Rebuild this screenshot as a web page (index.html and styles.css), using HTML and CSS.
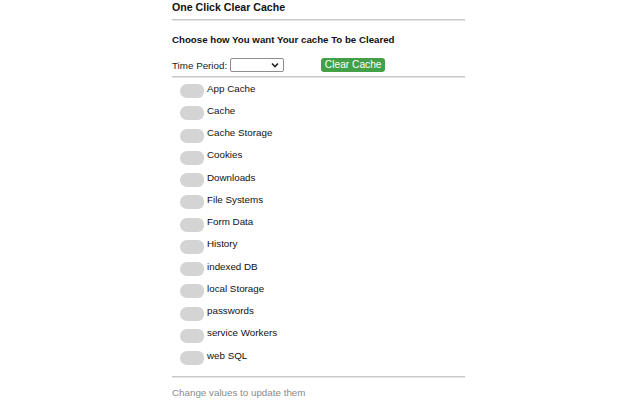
FILE: index.html
```
<!DOCTYPE html>
<html>
<head>
<meta charset="utf-8">
<link rel="stylesheet" href="styles.css">
</head>
<body>
<div class="wrap">
  <div class="title">One Click Clear Cache</div>
  <div class="rule rule-top"></div>
  <div class="heading">Choose how You want Your cache To be Cleared</div>
  <div class="controls">
    <span class="label">Time Period:</span>
    <span class="select-box">
      <select class="select"><option></option></select>
      <svg class="chev" width="8" height="6" viewBox="0 0 8 6"><path d="M1 1.5 L4 4.5 L7 1.5" fill="none" stroke="#222" stroke-width="1.6"/></svg>
    </span>
    <button class="btn">Clear Cache</button>
  </div>
  <div class="rule rule-mid"></div>
  <ul class="list">
    <li class="item"><span class="toggle"></span><span>App Cache</span></li>
    <li class="item"><span class="toggle"></span><span>Cache</span></li>
    <li class="item"><span class="toggle"></span><span>Cache Storage</span></li>
    <li class="item"><span class="toggle"></span><span>Cookies</span></li>
    <li class="item"><span class="toggle"></span><span>Downloads</span></li>
    <li class="item"><span class="toggle"></span><span>File Systems</span></li>
    <li class="item"><span class="toggle"></span><span>Form Data</span></li>
    <li class="item"><span class="toggle"></span><span>History</span></li>
    <li class="item"><span class="toggle"></span><span>indexed DB</span></li>
    <li class="item"><span class="toggle"></span><span>local Storage</span></li>
    <li class="item"><span class="toggle"></span><span>passwords</span></li>
    <li class="item"><span class="toggle"></span><span>service Workers</span></li>
    <li class="item"><span class="toggle"></span><span>web SQL</span></li>
  </ul>
  <div class="rule rule-bottom"></div>
  <div class="footer">Change values to update them</div>
</div>
</body>
</html>
```
FILE: styles.css
```
html, body {
  margin: 0;
  padding: 0;
  background: #fff;
}
body {
  font-family: "Liberation Sans", Arial, sans-serif;
  color: #111;
  font-size: 9.8px;
}
.wrap {
  width: 293px;
  margin: 0 0 0 172px;
  display: flex;
  flex-direction: column;
}
.title {
  font-weight: bold;
  font-size: 10.6px;
  line-height: 14px;
  height: 14px;
  color: #111;
}
.rule {
  height: 1px;
  border-top: 1px solid #c8c8c8;
  background: #e4e4e4;
}
.rule-top { margin-top: 5px; }
.heading {
  font-weight: bold;
  font-size: 9.7px;
  line-height: 14px;
  margin-top: 12px;
}
.controls {
  display: flex;
  align-items: center;
  margin-top: 11px;
  height: 14px;
}
.label {
  font-size: 9.8px;
  color: #222;
}
.select-box {
  position: relative;
  margin-left: 3px;
  width: 54px;
  height: 14px;
  display: inline-block;
}
.select {
  appearance: none;
  -webkit-appearance: none;
  box-sizing: border-box;
  width: 54px;
  height: 14px;
  border: 1px solid #8e8e8e;
  border-radius: 2px;
  background: #fff;
  margin: 0;
  padding: 0;
}
.chev {
  position: absolute;
  right: 5px;
  top: 4px;
}
.btn {
  margin-left: 37px;
  height: 14px;
  width: 64px;
  padding: 0;
  border: none;
  border-radius: 3px;
  background: #43a047;
  color: #fff;
  font-family: "Liberation Sans", Arial, sans-serif;
  font-size: 10.2px;
  line-height: 14px;
}
.rule-mid { margin-top: 4px; }
.list {
  list-style: none;
  margin: -1px 0 0 0;
  padding: 0;
}
.item {
  display: flex;
  align-items: center;
  height: 22.25px;
  color: #111;
}
.toggle {
  width: 24px;
  height: 14px;
  background: #d4d4d4;
  border-radius: 7px 6px 6px 7px;
  margin-left: 8px;
  margin-right: 3px;
  margin-top: 6px;
}
.rule-bottom { margin-top: 10px; }
.footer {
  color: #8a8a8a;
  font-size: 9.8px;
  margin-top: 9px;
  line-height: 12px;
}
```
